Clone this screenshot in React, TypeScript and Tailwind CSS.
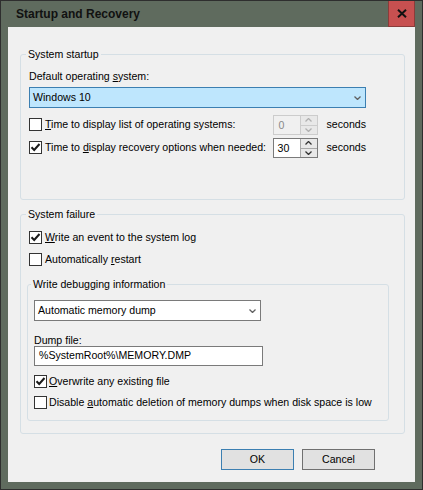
import React from "react";

function Check({ on }: { on?: boolean }) {
  return (
    <span className="flex h-[13px] w-[13px] shrink-0 items-center justify-center border border-[#333333] bg-white">
      {on && (
        <svg width="11" height="11" viewBox="0 0 11 11">
          <path d="M1.5 5.2 L4.2 8 L9.5 2" fill="none" stroke="#1a1a1a" strokeWidth="2" />
        </svg>
      )}
    </span>
  );
}

function Chevron({ up, color = "#606060" }: { up?: boolean; color?: string }) {
  return (
    <svg width="7" height="4" viewBox="0 0 7 4">
      <path
        d={up ? "M0.5 3.5 L3.5 0.5 L6.5 3.5" : "M0.5 0.5 L3.5 3.5 L6.5 0.5"}
        fill="none"
        stroke={color}
        strokeWidth="1.3"
      />
    </svg>
  );
}

function Spin({ value, disabled }: { value: string; disabled?: boolean }) {
  return (
    <div
      className={
        disabled
          ? "flex h-[20px] w-[45px] shrink-0 border border-[#cccccc] bg-[#f0f0f0]"
          : "flex h-[20px] w-[45px] shrink-0 border border-[#7a7a7a] bg-white"
      }
    >
      <div
        className={
          disabled
            ? "flex-1 pl-[5px] leading-[18px] text-[#8a8a8a]"
            : "flex-1 pl-[4px] leading-[18px]"
        }
      >
        {value}
      </div>
      <div
        className={
          disabled
            ? "flex w-[17px] flex-col gap-[1px] border-l border-[#cccccc] bg-[#cccccc]"
            : "flex w-[17px] flex-col gap-[1px] border-l border-[#a8a8a8] bg-[#a8a8a8]"
        }
      >
        <div className="flex flex-1 items-center justify-center bg-[#e8e8e8]">
          <Chevron up color={disabled ? "#b0b0b0" : "#333333"} />
        </div>
        <div className="flex flex-1 items-center justify-center bg-[#e8e8e8]">
          <Chevron color={disabled ? "#b0b0b0" : "#333333"} />
        </div>
      </div>
    </div>
  );
}

function GroupLabel({ children }: { children: React.ReactNode }) {
  return (
    <div className="-mt-[8px] ml-[-3px] leading-[14px]">
      <span className="bg-[#f0f0f0] px-[2px]">{children}</span>
    </div>
  );
}

export default function App() {
  return (
    <div
      className="flex h-[490px] w-[423px] flex-col border border-[#2e2e2e] bg-[#5f6b5e] text-[10.6px] whitespace-nowrap text-black"
      style={{ fontFamily: '"Liberation Sans", Arial, sans-serif' }}
    >
      <div className="flex h-[26px] shrink-0 items-center justify-between">
        <span className="pl-[15px] text-[12px] font-bold text-[#111111]">Startup and Recovery</span>
        <div className="mr-[7px] -mt-[1px] flex h-[26px] w-[27px] items-center justify-center border-x border-b border-[#8a3c3a] bg-[#c75050]">
          <svg width="10" height="9" viewBox="0 0 10 9">
            <path d="M1 0.8 L9 8.2 M9 0.8 L1 8.2" stroke="#111111" strokeWidth="2" />
          </svg>
        </div>
      </div>

      <div className="mx-[7px] flex h-[455px] flex-col bg-[#f0f0f0] pl-[12px] pr-[10px] pt-[27px]">
        {/* System startup */}
        <div className="h-[146px] rounded-[3px] border border-[#d5dfe5] pl-[8px] pr-[38px]">
          <GroupLabel>System startup</GroupLabel>
          <div className="mt-[8px] leading-[14px]">
            Default operating <u>s</u>ystem:
          </div>
          <div className="mt-[4px] flex h-[21px] items-center justify-between border border-[#3c7fb1] bg-[#bee6fd] pl-[3px] pr-[4px]">
            <span>Windows 10</span>
            <Chevron />
          </div>
          <div className="mt-[7px] flex h-[20px] items-center">
            <div className="flex w-[248px] items-center gap-[3px]">
              <Check />
              <span>
                <u>T</u>ime to display list of operating systems:
              </span>
            </div>
            <Spin value="0" disabled />
            <span className="ml-[9px]">seconds</span>
          </div>
          <div className="mt-[3px] flex h-[20px] items-center">
            <div className="flex w-[248px] items-center gap-[3px]">
              <Check on />
              <span>
                Time to <u>d</u>isplay recovery options when needed:
              </span>
            </div>
            <Spin value="30" />
            <span className="ml-[9px]">seconds</span>
          </div>
        </div>

        {/* System failure */}
        <div className="mt-[14px] h-[220px] rounded-[3px] border border-[#d5dfe5] pl-[6px] pr-[15px]">
          <div className="ml-[2px]">
            <GroupLabel>System failure</GroupLabel>
          </div>
          <div className="ml-[2px] mt-[8px] flex h-[17px] items-center gap-[3px]">
            <Check on />
            <span>
              <u>W</u>rite an event to the system log
            </span>
          </div>
          <div className="ml-[2px] mt-[5px] flex h-[17px] items-center gap-[3px]">
            <Check />
            <span>
              Automatically <u>r</u>estart
            </span>
          </div>

          <div className="mt-[16px] h-[137px] rounded-[3px] border border-[#d5dfe5] pl-[6px]">
            <GroupLabel>Write debugging information</GroupLabel>
            <div className="mt-[9px] flex h-[21px] w-[227px] items-center justify-between border border-[#7a7a7a] bg-white pl-[3px] pr-[4px]">
              <span>Automatic memory dump</span>
              <Chevron />
            </div>
            <div className="mt-[13px] leading-[12px]">Dump file:</div>
            <div className="flex h-[20px] w-[229px] items-center border border-[#7a7a7a] bg-white pl-[4px]">
              %SystemRoot%\MEMORY.DMP
            </div>
            <div className="mt-[7px] flex h-[17px] items-center gap-[2px]">
              <Check on />
              <span>
                <u>O</u>verwrite any existing file
              </span>
            </div>
            <div className="mt-[4px] flex h-[17px] items-center gap-[2px]">
              <Check />
              <span>
                Disable <u>a</u>utomatic deletion of memory dumps when disk space is low
              </span>
            </div>
          </div>
        </div>

        <div className="mt-[15px] flex justify-end gap-[8px] pr-[30px]">
          <button className="h-[21px] w-[73px] border border-[#3c7fb1] bg-[#e1e1e1] text-[10.6px]">OK</button>
          <button className="h-[21px] w-[73px] border border-[#707070] bg-[#e1e1e1] text-[10.6px]">Cancel</button>
        </div>
      </div>
    </div>
  );
}
